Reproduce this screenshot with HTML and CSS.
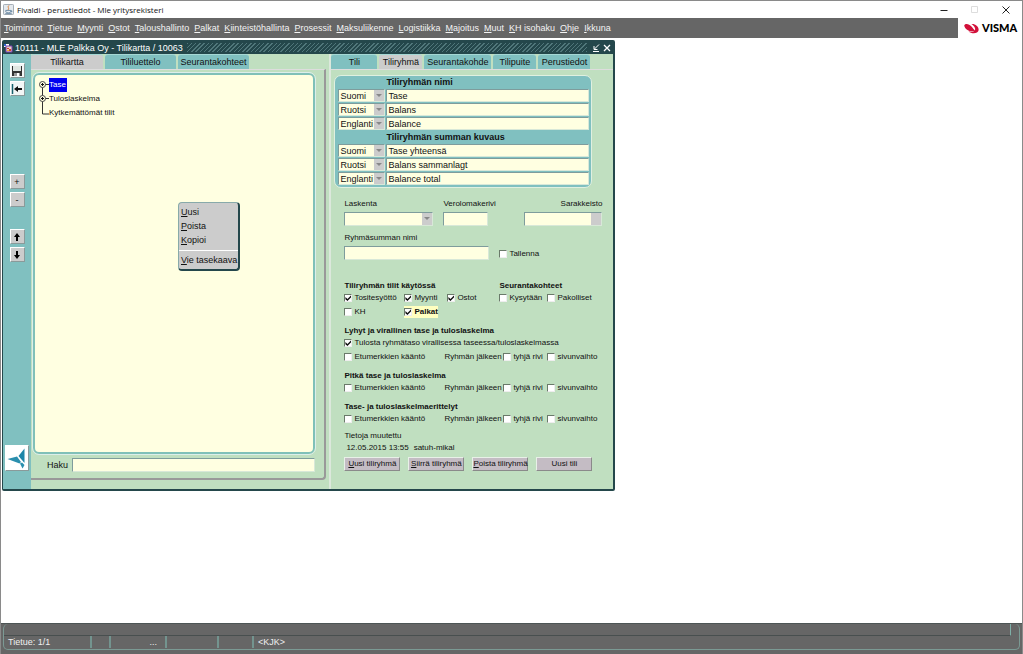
FILE: index.html
```html
<!DOCTYPE html>
<html lang="fi">
<head>
<meta charset="utf-8">
<title>Fivaldi - perustiedot - Mle yritysrekisteri</title>
<link rel="stylesheet" href="styles.css">
</head>
<body>
<div class="app">
  <header class="os-bar">
    <svg class="java" viewBox="0 0 12 12"><rect x=".5" y=".5" width="11" height="11" rx="1" fill="#e4e9ee" stroke="#9aa4ad"/><path d="M6.5 1.5C4 4 7.500 4 5.500 6.500" fill="none" stroke="#d9792b"/><path d="M3 7h5.500v1.500C8 10 4 10 3 8.500zM8.500 7.500h1.200v1H8.500M2.500 10.500h7" fill="none" stroke="#5d7f9c" stroke-width=".9"/></svg>
    <span class="os-title">Fivaldi - perustiedot - Mle yritysrekisteri</span>
    <div class="os-buttons">
      <button aria-label="Pienennä"><svg viewBox="0 0 8 8"><path d="M.5 4.500h7" stroke="#222" fill="none"/></svg></button>
      <button aria-label="Suurenna" disabled><svg viewBox="0 0 8 8"><path d="M.5.5h6v6h-6z" stroke="#ddd" fill="none"/></svg></button>
      <button aria-label="Sulje"><svg viewBox="0 0 8 8"><path d="M.5.5l7 7m0-7l-7 7" stroke="#222" fill="none"/></svg></button>
    </div>
  </header>
  <div class="menu-row">
    <nav class="menu">
      <a href="#"><u>T</u>oiminnot</a><a href="#"><u>T</u>ietue</a><a href="#"><u>M</u>yynti</a><a href="#"><u>O</u>stot</a><a href="#"><u>T</u>aloushallinto</a><a href="#"><u>P</u>alkat</a><a href="#"><u>K</u>iinteistöhallinta</a><a href="#"><u>P</u>rosessit</a><a href="#"><u>M</u>aksuliikenne</a><a href="#"><u>L</u>ogistiikka</a><a href="#"><u>M</u>ajoitus</a><a href="#"><u>M</u>uut</a><a href="#"><u>K</u>H isohaku</a><a href="#"><u>O</u>hje</a><a href="#"><u>I</u>kkuna</a>
    </nav>
    <div class="brand">
      <svg class="visma" viewBox="0 0 15 11"><path d="M.2 2.500C1.500 0 5 .8 7.500 3.500C9 5.200 10 7 11.500 7.500C8 9.500 1 7.500 .2 2.500z" fill="#d2103a"/><path d="M7.300 1C11 .4 15 3.500 14.600 7.200C14 10.800 8 11.200 4.500 8.500C8 9 12 8.500 11 5.200C10.300 3.300 9 1.800 7.300 1z" fill="#d2103a"/></svg>
      <span class="brand-name">VISMA</span>
    </div>
  </div>

  <main class="desk">
    <section class="win">
      <div class="win-bar">
        <svg class="win-icon" viewBox="0 0 10 10"><path d="M1 1h5v3H1z" fill="#fff"/><path d="M3 3h6v6H3z" fill="#e8d0c0" stroke="#7b3fb0"/><path d="M4 5h2v1H4zM6 6h2v2H6z" fill="#d43c2c"/><path d="M4 7h2v1H4z" fill="#e8b92c"/><path d="M1 1h2v2H1z" fill="#3366cc"/></svg>
        <span>10111 - MLE Palkka Oy - Tilikartta / 10063</span>
        <i class="grip"></i>
        <button aria-label="Pienennä"><svg viewBox="0 0 8 8"><path d="M7 .5L2.500 5M2 2v3.500h3.500M1 7.500h6" stroke="#fff" fill="none"/></svg></button>
        <button aria-label="Sulje"><svg viewBox="0 0 8 8"><path d="M1 1l6 6m0-6L1 7" stroke="#fff" stroke-width="1.300" fill="none"/></svg></button>
      </div>
      <div class="win-body">
        <aside class="tools">
          <button aria-label="Tallenna"><svg viewBox="0 0 12 12"><path d="M1 1h10v10H1z" fill="#333"/><path d="M2 1h8v5H2z" fill="#dfe6e2"/><path d="M3 8h6v3H3z" fill="#999"/><path d="M6 8h2v3H6z" fill="#fff"/></svg></button>
          <button aria-label="Poistu"><svg viewBox="0 0 12 12"><path d="M1.500 1v10" stroke="#17606e" stroke-width="1.500"/><path d="M11 6H6" stroke="#111" stroke-width="2"/><path d="M3 6l4-3v6z" fill="#111"/></svg></button>
          <button class="grey first">+</button>
          <button class="grey">-</button>
          <button class="grey first-arrow" aria-label="Ylös"><svg viewBox="0 0 12 12"><path d="M6 10V5" stroke="#000" stroke-width="2"/><path d="M6 2L3 6h6z"/></svg></button>
          <button class="grey" aria-label="Alas"><svg viewBox="0 0 12 12"><path d="M6 2v5" stroke="#000" stroke-width="2"/><path d="M6 10L3 6h6z"/></svg></button>
          <button class="logo" aria-label="Fivaldi"><svg viewBox="0 0 22 22"><path d="M1.500 12L11 9.500L15 15L13.500 16.500z" fill="#2a8fae"/><path d="M18.500 1.500V16L12.500 9z" fill="#1d86a8"/><path d="M14 16.500L16 15.500L18.500 18L16.500 21.500z" fill="#2a8fae"/></svg></button>
        </aside>

        <div class="left">
          <div class="tabs"><button class="tab on w72">Tilikartta</button><button class="tab w71">Tililuettelo</button><button class="tab w71">Seurantakohteet</button></div>
          <div class="left-page">
            <div class="tree">
              <svg class="lines" viewBox="0 0 11 38"><path d="M4.500 5v31H11M4.500 6.500H11M4.500 20.500H11" fill="none" stroke="#333"/><circle cx="4.500" cy="6.500" r="3" fill="#ffffe1" stroke="#444"/><circle cx="4.500" cy="20.500" r="3" fill="#ffffe1" stroke="#444"/><path d="M3 6.500h3M4.500 5v3M3 20.500h3M4.500 19v3" stroke="#111"/></svg>
              <ul>
                <li><span class="sel">Tase</span></li>
                <li>Tuloslaskelma</li>
                <li>Kytkemättömät tilit</li>
              </ul>
              <div class="popup" role="menu">
                <a href="#"><u>U</u>usi</a><a href="#"><u>P</u>oista</a><a href="#"><u>K</u>opioi</a><hr><a href="#"><u>V</u>ie tasekaava</a>
              </div>
            </div>
            <div class="search"><label for="haku">Haku</label><input id="haku" type="text"></div>
          </div>
        </div>

        <div class="right">
          <div class="tabs"><button class="tab w46">Tili</button><button class="tab on w43">Tiliryhmä</button><button class="tab w67">Seurantakohde</button><button class="tab w43">Tilipuite</button><button class="tab w52">Perustiedot</button></div>
          <div class="right-page">
            <div class="names">
              <h2>Tiliryhmän nimi</h2>
              <div class="name"><select aria-label="Kieli"><option>Suomi</option></select><input aria-label="Nimi" value="Tase"></div>
              <div class="name"><select aria-label="Kieli"><option>Ruotsi</option></select><input aria-label="Nimi" value="Balans"></div>
              <div class="name"><select aria-label="Kieli"><option>Englanti</option></select><input aria-label="Nimi" value="Balance"></div>
              <h2>Tiliryhmän summan kuvaus</h2>
              <div class="name"><select aria-label="Kieli"><option>Suomi</option></select><input aria-label="Kuvaus" value="Tase yhteensä"></div>
              <div class="name"><select aria-label="Kieli"><option>Ruotsi</option></select><input aria-label="Kuvaus" value="Balans sammanlagt"></div>
              <div class="name"><select aria-label="Kieli"><option>Englanti</option></select><input aria-label="Kuvaus" value="Balance total"></div>
            </div>

            <form class="form">
              <div class="fields">
                <div class="field f-calc"><label for="las">Laskenta</label><select id="las"><option></option></select></div>
                <div class="field f-tax"><label for="ver">Verolomakerivi</label><input id="ver"></div>
                <div class="field f-col"><label for="sar">Sarakkeisto</label><select id="sar" class="off"><option></option></select></div>
              </div>
              <div class="fields sum">
                <div class="field f-sum"><label for="ryh">Ryhmäsumman nimi</label><input id="ryh"></div>
                <label class="chk"><input type="checkbox">Tallenna</label>
              </div>
              <div class="grid5 gap-l"><h3 class="span3">Tiliryhmän tilit käytössä</h3><h3 class="span2">Seurantakohteet</h3></div>
              <div class="grid5"><label class="chk"><input type="checkbox" checked>Tositesyöttö</label><label class="chk"><input type="checkbox" checked>Myynti</label><label class="chk"><input type="checkbox" checked>Ostot</label><label class="chk"><input type="checkbox">Kysytään</label><label class="chk"><input type="checkbox">Pakolliset</label></div>
              <div class="grid5 gap-xs"><label class="chk"><input type="checkbox">KH</label><label class="chk hot"><input type="checkbox" checked>Palkat</label></div>
              <h3 class="gap-s">Lyhyt ja virallinen tase ja tuloslaskelma</h3>
              <label class="chk"><input type="checkbox" checked>Tulosta ryhmätaso virallisessa taseessa/tuloslaskelmassa</label>
              <div class="grid4 gap-xs"><label class="chk"><input type="checkbox">Etumerkkien kääntö</label><span>Ryhmän jälkeen</span><label class="chk"><input type="checkbox">tyhjä rivi</label><label class="chk"><input type="checkbox">sivunvaihto</label></div>
              <h3 class="gap-s">Pitkä tase ja tuloslaskelma</h3>
              <div class="grid4"><label class="chk"><input type="checkbox">Etumerkkien kääntö</label><span>Ryhmän jälkeen</span><label class="chk"><input type="checkbox">tyhjä rivi</label><label class="chk"><input type="checkbox">sivunvaihto</label></div>
              <h3 class="gap-s">Tase- ja tuloslaskelmaerittelyt</h3>
              <div class="grid4"><label class="chk"><input type="checkbox">Etumerkkien kääntö</label><span>Ryhmän jälkeen</span><label class="chk"><input type="checkbox">tyhjä rivi</label><label class="chk"><input type="checkbox">sivunvaihto</label></div>
              <p class="edited">Tietoja muutettu</p>
              <p class="stamp"><span>12.05.2015 13:55</span><span>satuh-mikal</span></p>
              <div class="actions"><button type="button"><u>U</u>usi tiliryhmä</button><button type="button"><u>S</u>iirrä tiliryhmä</button><button type="button"><u>P</u>oista tiliryhmä</button><button type="button">Uusi tili</button></div>
            </form>
          </div>
        </div>
      </div>
    </section>
  </main>

  <footer class="status">
    <div class="status-in">
      <div class="status-top"></div>
      <div class="status-row"><span class="s1">Tietue: 1/1</span><span class="s2"></span><span class="s3">...</span><span class="s4"></span><span class="s5"></span><span class="s6">&lt;KJK&gt;</span></div>
    </div>
  </footer>
</div>
</body>
</html>
```
FILE: styles.css
```css
* { box-sizing: border-box; }
body { margin: 0; font: 9px/12px "Liberation Sans", Arial, sans-serif; color: #111; background: #fff; }
button, input, select { font: inherit; color: inherit; margin: 0; padding: 0; border: 0; border-radius: 0; min-width: 0; }
h2, h3, p, ul { margin: 0; padding: 0; }
a { color: inherit; text-decoration: none; }
svg { display: block; }
.app { display: flex; flex-direction: column; min-height: 100vh; border: 1px solid #8a8a8a; border-bottom: 0; }

.os-bar { display: flex; align-items: center; height: 17px; padding: 0 12px 0 2px; gap: 3px; }
.java { width: 11px; height: 11px; }
.os-title { flex: 1; font: 8px/12px "Open Sans", sans-serif; }
.os-buttons { display: flex; gap: 23px; }
.os-buttons button { width: 8px; height: 8px; background: none; }

.menu-row { display: flex; height: 20px; }
.menu { flex: 1; display: flex; align-items: center; gap: 5px; padding-left: 3px; background: #666; color: #f4f4f4; white-space: nowrap; }
.brand { display: flex; align-items: center; gap: 3px; width: 64px; padding-left: 6px; }
.visma { width: 15px; height: 11px; }
.brand-name { font: 900 11px/14px Lato, sans-serif; color: #000; }

.desk { flex: 1; padding: 2px 1px; }
.win { width: calc(60% + 2px); border: 1px solid #24474b; border-right-width: 2px; border-bottom-width: 2px; border-radius: 2px; background: #c0dfc0; }
.win-bar { display: flex; align-items: center; gap: 2px; height: 13px; padding-right: 2px; background: #24474b; color: #fff; white-space: nowrap; }
.win-icon { width: 10px; height: 10px; }
.grip { flex: 1; height: 9px; margin: 0 2px; background: repeating-linear-gradient(135deg, #6d9699 0 1px, transparent 1px 3px); opacity: .6; }
.win-bar button { width: 8px; height: 8px; margin-left: 1px; background: none; }
.win-body { display: flex; }

.tools { display: flex; flex-direction: column; align-items: center; gap: 3px; width: 28px; padding: 9px 0 18px; background: #80c0c0; }
.tools button { display: flex; align-items: center; justify-content: center; width: 15px; height: 15px; border: 1px solid; border-color: #fff #8a9a9a #8a9a9a #fff; background: #f2f6f6; }
.tools svg { width: 12px; height: 12px; }
.tools .grey { background: #ccc; }
.tools .first { margin-top: 75px; }
.tools .first-arrow { margin-top: 19px; }
.tools .logo { width: 24px; height: 26px; margin-top: auto; background: #fff; }
.tools .logo svg { width: 22px; height: 22px; }

.tabs { display: flex; gap: 2px; height: 15px; }
.tab { height: 15px; border-top: 1px solid #a5d8d5; border-radius: 3px 3px 0 0; background: #80c0c0; white-space: nowrap; }
.tab.on { background: #ccc; }
.w72 { width: 72px; } .w71 { width: 71px; } .w46 { width: 46px; } .w43 { width: 43px; } .w67 { width: 67px; } .w52 { width: 52px; }

.left { flex: 1; display: flex; flex-direction: column; margin-bottom: 9px; }
.left-page { flex: 1; display: flex; flex-direction: column; padding: 3px 9px 6px 2px; border: solid #999; border-width: 1px 2px 2px 0; border-top-color: #ddd; border-radius: 0 0 4px 0; }
.tree { position: relative; flex: 1; display: flex; padding: 3px; border: 2px solid #80c0b8; border-radius: 6px; outline: 1px solid #dceeea; background: #ffffe1; font-size: 8px; }
.lines { width: 11px; height: 38px; }
.tree li { display: flex; height: 14px; align-items: center; list-style: none; }
.sel { background: #0000f0; color: #fff; line-height: 14px; padding-right: 1px; }
.popup { position: absolute; left: 143px; top: 127px; width: 62px; padding: 2px 0; border: 1px solid #8aa; border-right: 2px solid #24474b; border-bottom: 2px solid #24474b; border-radius: 4px; background: #ccc; font-size: 9px; white-space: nowrap; }
.popup a { display: block; padding-left: 2px; line-height: 14px; }
.popup hr { margin: 3px 0 2px; border: 0; border-top: 1px solid #fff; }
.search { display: flex; align-items: center; gap: 4px; margin-top: 4px; padding-left: 14px; }
.search input { flex: 1; }

input, select { height: 14px; border: 1px solid; border-color: #7e9c9c #d8e8d8 #d8e8d8 #7e9c9c; background-color: #ffffe1; }
select { appearance: none; padding-left: 1px; background-image: url("data:image/svg+xml,%3Csvg xmlns='http://www.w3.org/2000/svg' viewBox='0 0 6 4'%3E%3Cpath d='M0 0h6L3 3z' fill='%23888'/%3E%3C/svg%3E"), linear-gradient(#ccc, #ccc); background-repeat: no-repeat; background-size: 6px 4px, 10px 100%; background-position: right 2px center, right; }
select.off { background-image: linear-gradient(#ccc, #ccc); background-size: 10px 100%; background-position: right; }

.right { width: 284px; border-left: 2px solid #dce8dc; margin-left: 3px; }
.right-page { padding: 5px 0 18px 3px; border-top: 1px solid #ddd; }
.names { width: 258px; padding: 0 2px 1px 3px; border: 1px solid #e0f0e0; border-radius: 7px; background: #80c0c0; }
.names h2 { padding-left: 48px; font-size: 9px; line-height: 13px; }
.name { display: flex; height: 14px; gap: 1px; padding-bottom: 1px; }
.name select { width: 47px; height: 13px; }
.name input { flex: 1; height: 13px; padding-left: 1px; }

.form { width: 268px; padding: 10px 0 0 10px; font-size: 8px; white-space: nowrap; }
.form h3 { font-size: 8px; line-height: 12px; }
.fields { display: flex; gap: 10px; }
.field { display: flex; flex-direction: column; gap: 2px; }
.f-calc { width: 89px; } .f-tax { width: 45px; } .f-col { width: 78px; margin-left: auto; }
.f-col label { text-align: right; }
.sum { align-items: flex-end; margin-top: 6px; }
.f-sum { width: 145px; }
.chk { display: flex; align-items: center; gap: 2px; height: 12px; }
.chk input { position: relative; appearance: none; width: 8px; height: 8px; background: #fff; border-color: #6a7a6a #eee #eee #6a7a6a; }
.chk input:checked::after { content: ""; position: absolute; inset: 0; background: #111; clip-path: polygon(0 35%, 35% 65%, 100% 0, 100% 35%, 35% 100%, 0 70%); }
.hot { width: 34px; background: #ffffc0; font-weight: bold; }
.grid5 { display: grid; grid-template-columns: 60px 43px 52px 48px 1fr; }
.span3 { grid-column: span 3; } .span2 { grid-column: span 2; }
.grid4 { display: grid; grid-template-columns: 100px 59px 44px 1fr; }
.gap-l { margin-top: 20px; } .gap-s { margin-top: 7px; } .gap-xs { margin-top: 2px; }
.edited { margin-top: 5px; }
.stamp { display: flex; gap: 5px; padding-left: 2px; }
.actions { display: flex; gap: 8px; margin-top: 3px; }
.actions button { width: 56px; height: 14px; border: 1px solid; border-color: #e8f0e8 #8a8a8a #8a8a8a #e8f0e8; background: #c4bcc4; white-space: nowrap; }

.status { height: 31px; padding: 0 2px 4px; background: #666; color: #f0f0f0; border-top: 1px solid #4d5555; }
.status-in { border: 1px solid #7b9a94; border-top: 0; border-radius: 5px; height: 26px; }
.status-top { height: 12px; border-bottom: 1px solid #484f4f; border-right: 1px solid #7fb0a8; margin-right: 8px; }
.status-row { display: flex; line-height: 13px; }
.status-row span { border-right: 2px solid #73948f; height: 12px; padding-left: 4px; }
.s1 { width: 88px; } .s2 { width: 19px; } .s3 { width: 56px; text-align: right; padding-right: 8px; } .s4 { width: 52px; } .s5 { width: 35px; }
.status-row .s6 { border: 0; }
```
